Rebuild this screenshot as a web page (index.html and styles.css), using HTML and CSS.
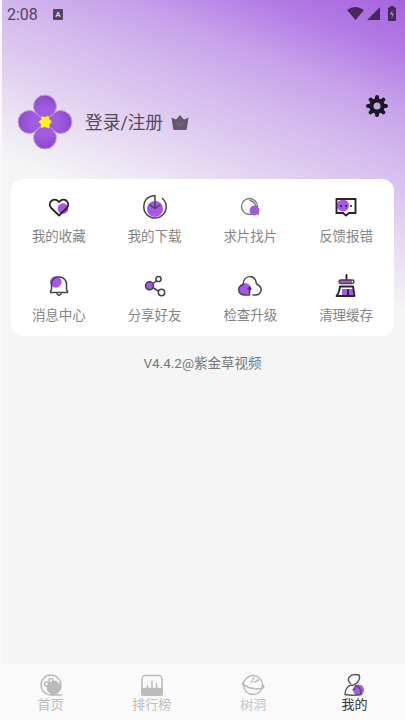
FILE: index.html
```html
<!DOCTYPE html>
<html lang="zh-CN">
<head>
<meta charset="utf-8">
<title>我的</title>
<link rel="stylesheet" href="styles.css">
</head>
<body>
<div class="app">
  <header class="status">
    <span class="time">2:08</span>
    <span class="badge">A</span>
    <svg class="signals" width="52" height="18" viewBox="0 0 52 18"><path d="M1 5Q9-1 18 5L9.500 15ZM21 15L34 2V15Z"/><path d="M44 1h4v1.500h2V16h-8V2.500h2Z"/><path class="bolt" d="M46.500 4.500L44 9.500h2l-.5 4 2.500-5h-2Z"/></svg>
  </header>

  <section class="profile">
    <svg class="avatar" width="56" height="56" viewBox="0 0 56 56">
      <defs><radialGradient id="petal" gradientUnits="userSpaceOnUse" cx="28" cy="28" r="28"><stop offset="0" stop-color="#a45be0"/><stop offset=".5" stop-color="#a05cdf"/><stop offset="1" stop-color="#8a47cf"/></radialGradient></defs>
      <g fill="url(#petal)" stroke="#c9a9c8">
        <path d="M28 28C23 22 16.500 19 16.500 12.500A11.500 11.500 0 0 1 39.500 12.500C39.500 19 33 22 28 28Z"/>
        <path d="M28 28C34 23 37 16.500 43.500 16.500A11.500 11.500 0 0 1 43.500 39.500C37 39.500 34 33 28 28Z"/>
        <path d="M28 28C33 34 39.500 37 39.500 43.500A11.500 11.500 0 0 1 16.500 43.500C16.500 37 23 34 28 28Z"/>
        <path d="M28 28C22 33 19 39.500 12.500 39.500A11.500 11.500 0 0 1 12.500 16.500C19 16.500 22 23 28 28Z"/>
      </g>
      <path class="core" d="M24.500 22l3.500 1 3.500-1.500 .5 3.500 3 2.500-2.500 3-.5 4-4-1.500-4 1 0-3.500-2.500-3 3-2Z"/>
    </svg>
    <span class="login">登录/注册</span>
    <svg class="crown" width="18" height="17" viewBox="0 0 18 17"><path d="M.5 3.500l4.500 2 4-4.500 4 4.500 4.500-2-1.500 11q0 1.500-1.500 1.500h-11Q2 16 2 14.500Z"/><path class="crown-mark" d="M5.500 8.500L9 12l3.500-3.500"/></svg>
    <svg class="gear" width="24" height="24" viewBox="-12 -12 24 24"><g stroke="#1d1723" stroke-width="4" stroke-linecap="round"><path d="M0-9V9M-9 0H9M-6.400-6.400L6.400 6.400M6.400-6.400L-6.400 6.400"/></g><circle r="7.800" fill="#1d1723"/><circle r="3.500" fill="#c6a3e9"/></svg>
  </section>

  <main class="card">
    <div class="item"><svg viewBox="0 0 28 28"><circle class="spot" cx="18" cy="15.500" r="5.300"/><path class="heavy" d="M14 22.500L6 14.700C2 9.500 9 3 14 9C19 3 26 9.500 22 14.700Z"/></svg><span>我的收藏</span></div>
    <div class="item"><svg viewBox="0 0 28 28"><circle class="spot" cx="14" cy="16" r="8"/><path d="M14 15.500V2.500C6 3 2.800 8 2.800 13.500A11.200 11.200 0 1 0 21.500 5.500M9 12l5 3.500 5-3.500"/></svg><span>我的下载</span></div>
    <div class="item"><svg viewBox="0 0 28 28"><circle class="thin" cx="13.500" cy="13.500" r="8"/><path class="thin" d="M14 7.500Q19 8.500 19.500 13"/><circle class="spot" cx="18.500" cy="17.500" r="5"/><path class="thin" d="M20.500 13l-3 5.500h3l2 3"/></svg><span>求片找片</span></div>
    <div class="item"><svg viewBox="0 0 28 28"><circle class="spot" cx="11" cy="12.500" r="6"/><path class="heavy square" d="M4.500 6h19v14H17l-3 2.500-3-2.500H4.500Z"/><path class="dots" d="M9 13h.1M14 13h.1M19 13h.1"/></svg><span>反馈报错</span></div>
    <div class="item"><svg viewBox="0 0 28 28"><circle class="spot" cx="10.800" cy="10" r="5.800"/><path d="M6.500 18v-5.500A7 6.500 0 0 1 13 5h2A7 7 0 0 1 21.500 12.500V18l1 1v1.500h-17V19ZM12 22l2 1.500 2-1.500"/></svg><span>消息中心</span></div>
    <div class="item"><svg viewBox="0 0 28 28"><path d="M9 14L17 7.500M9 14L20 20.500"/><circle class="spot ring" cx="8.500" cy="13.800" r="4"/><circle class="hole" cx="17.500" cy="7" r="2.600"/><circle class="hole" cx="20.500" cy="20.500" r="3.200"/></svg><span>分享好友</span></div>
    <div class="item"><svg viewBox="0 0 28 28"><circle class="spot" cx="9" cy="17" r="6"/><path d="M13.500 23H9C1 23 1 13.500 7 13C7.500 2 20 2 20.500 12C28 15.500 25.500 23 19 23H17M13.500 23V15.500M12 17l1.500-2 1.500 2"/></svg><span>检查升级</span></div>
    <div class="item"><svg viewBox="0 0 28 28"><path class="spot" d="M8 8h12v3.500H8ZM10 17h11v7H10Z"/><path class="heavy" d="M14.500 3V8"/><rect class="bar" x="7" y="8" width="15" height="3.500" rx="1.700"/><path class="heavy" d="M8 14.500h13L22.500 24H4.500q3-3.500 3.500-9.500ZM16 23.500V18"/></svg><span>清理缓存</span></div>
  </main>

  <p class="version">V4.4.2@紫金草视频</p>

  <nav class="tabs">
    <div class="tab"><svg viewBox="0 0 24 24"><circle cx="12" cy="12" r="10"/><circle class="fill" cx="14.500" cy="14.500" r="6.300"/><circle class="hole" cx="12" cy="7.500" r="2"/><circle class="hole" cx="7.500" cy="11" r="2"/><path d="M13 22h10"/></svg><span>首页</span></div>
    <div class="tab"><svg viewBox="0 0 24 24"><path class="fill" d="M2 15.500h20V22H2Z"/><rect x="2" y="2.500" width="20" height="19.500" rx="3.500"/><path d="M7.500 15v-3M12 15V7.500M16.500 15V10"/></svg><span>排行榜</span></div>
    <div class="tab dim"><svg viewBox="0 0 24 24"><circle cx="12" cy="12" r="9.500"/><path d="M2.500 9Q0 12 3.500 12.500Q11 17 20.500 15.500Q24 15 22 12M10 10l3-5.500M13 9.500l5-3"/></svg><span>树洞</span></div>
    <div class="tab active"><svg viewBox="0 0 24 24"><circle class="spot" cx="16.500" cy="17" r="5.500"/><path d="M9 11C3 6 8 0 17 2C19 6 15 11 11.500 12C6 12 3 16 3 21.500Q11 23 19 21.500Q19.500 14 13 12.500M10.500 17l3-2"/></svg><span>我的</span></div>
  </nav>
</div>
</body>
</html>
```
FILE: styles.css
```css
* { box-sizing: border-box; }
body { margin: 0; }

.app {
  width: 405px;
  height: 720px;
  display: flex;
  flex-direction: column;
  padding-right: 2px;
  border-left: 2px solid #faf8fc;
  background: linear-gradient(201deg, #a763df 0, #b27be4 50px, #c69fea 100px, #d4b8ed 150px, #dfcdf0 200px, #eae1f4 245px, #f5f5f5 292px);
  color: #777;
  font-family: Roboto, "Noto Sans CJK SC", sans-serif;
}

.status { display: flex; align-items: center; height: 28px; padding: 0 5px; }
.time { width: 46px; color: #51465d; font-size: 16px; }
.badge {
  width: 10px; height: 11px; border-radius: 1px;
  background: #51465d; color: #ddd0ea;
  font-size: 8px; font-weight: 700; line-height: 11px; text-align: center;
}
.signals { margin-left: auto; fill: #46285f; }
.signals .bolt { fill: #b184dc; }

.profile { display: flex; align-items: center; height: 151px; padding: 37px 0 0 15px; }
.avatar .core { fill: #fbf51b; }
.login { margin: 2px 0 0 12px; color: #55495f; font-size: 17.700px; line-height: 26px; }
.crown { margin: 1px 0 0 8px; fill: #66596f; }
.crown .crown-mark { fill: none; stroke: #857390; }
.gear { margin: -33px 14px 0 auto; }

.card {
  display: grid;
  grid-template: repeat(2, 79px) / repeat(4, 1fr);
  height: 157px;
  margin: 0 9px;
  border-radius: 12px;
  background: #fff;
}
.item { display: flex; flex-direction: column; align-items: center; padding-top: 14px; font-size: 13.500px; line-height: 20px; color: #858585; }
.item svg { width: 28px; height: 28px; margin-bottom: 4.500px; }
.item path, .item circle, .item .bar { fill: none; stroke: #444; stroke-width: 1.500; stroke-linejoin: round; stroke-linecap: round; }
.item .spot { fill: #a855ec; stroke: none; }
.item .ring { stroke: #444; }
.item .hole { fill: #fff; }
.item .heavy { stroke: #292529; stroke-width: 1.900; }
.item .square { stroke-linejoin: miter; }
.item .thin { stroke: #777; stroke-width: 1.300; }
.item .dots { stroke: #292529; stroke-width: 2; }

.version { margin: 17px 0 0; text-align: center; font-size: 13.500px; line-height: 20px; }

.tabs {
  display: grid;
  grid-template-columns: repeat(4, 101.300px);
  justify-content: center;
  height: 56px;
  margin: auto -2px 0 0;
  padding-right: 2px;
  background: #fafafa;
}
.tab { display: flex; flex-direction: column; align-items: center; padding-top: 9px; color: #bbb; font-size: 13px; line-height: 18px; }
.tab svg { width: 24px; height: 24px; margin-bottom: -1px; fill: none; stroke: #bbb; stroke-width: 1.500; }
.tab .fill { fill: #bbb; }
.tab .hole { fill: #fafafa; }
.tab.dim { color: #c4c4c4; }
.tab.active { color: #333; }
.tab.active svg { stroke: #555; }
.tab .spot { fill: #a855ec; stroke: none; }
```
